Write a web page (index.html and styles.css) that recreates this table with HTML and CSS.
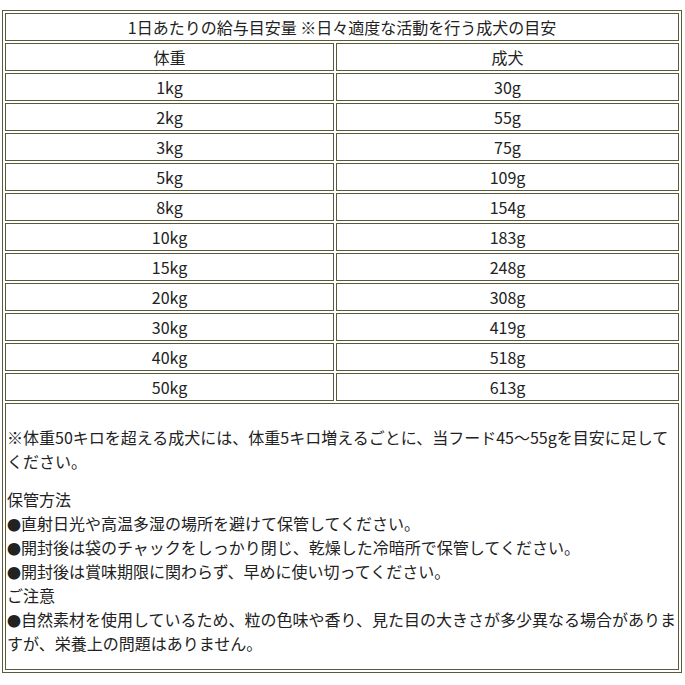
FILE: index.html
```html
<!DOCTYPE html>
<html lang="ja">
<head>
<meta charset="utf-8">
<link rel="stylesheet" href="styles.css">
</head>
<body>
<table class="feed">
  <tr><td class="title" colspan="2">1日あたりの給与目安量 ※日々適度な活動を行う成犬の目安</td></tr>
  <tr><td class="c1">体重</td><td>成犬</td></tr>
  <tr><td class="c1">1kg</td><td>30g</td></tr>
  <tr><td class="c1">2kg</td><td>55g</td></tr>
  <tr><td class="c1">3kg</td><td>75g</td></tr>
  <tr><td class="c1">5kg</td><td>109g</td></tr>
  <tr><td class="c1">8kg</td><td>154g</td></tr>
  <tr><td class="c1">10kg</td><td>183g</td></tr>
  <tr><td class="c1">15kg</td><td>248g</td></tr>
  <tr><td class="c1">20kg</td><td>308g</td></tr>
  <tr><td class="c1">30kg</td><td>419g</td></tr>
  <tr><td class="c1">40kg</td><td>518g</td></tr>
  <tr><td class="c1">50kg</td><td>613g</td></tr>
  <tr>
    <td class="notes" colspan="2">
      <div class="note-first">※体重50キロを超える成犬には、体重5キロ増えるごとに、当フード45～55gを目安に足してください。</div>
      <div class="note-second">保管方法<br><span class="dot">●</span>直射日光や高温多湿の場所を避けて保管してください。<br><span class="dot">●</span>開封後は袋のチャックをしっかり閉じ、乾燥した冷暗所で保管してください。<br><span class="dot">●</span>開封後は賞味期限に関わらず、早めに使い切ってください。<br>ご注意<br><span class="dot">●</span>自然素材を使用しているため、粒の色味や香り、見た目の大きさが多少異なる場合がありますが、栄養上の問題はありません。</div>
    </td>
  </tr>
</table>
</body>
</html>
```

FILE: styles.css
```css
html, body {
  margin: 0;
  padding: 0;
  background: #ffffff;
}
body {
  font-family: "Noto Sans CJK JP", "Noto Sans", sans-serif;
  font-size: 16px;
  line-height: 24px;
  color: #222222;
}
.feed {
  margin: 10px 0 0 2px;
  width: 680px;
  border: 1px solid #5a5a3c;
  border-collapse: separate;
  border-spacing: 2px;
}
.feed td {
  border: 1px solid #5a5a3c;
  padding: 1px;
  text-align: center;
  vertical-align: middle;
  height: 24px;
  box-sizing: content-box;
}
.feed td.c1 {
  box-sizing: border-box;
  width: 329px;
}
.feed td.notes {
  text-align: left;
  vertical-align: top;
  padding: 1px 1px 1px 1px;
}
.note-first {
  margin-top: 20px;
}
.note-second {
  margin-top: 14px;
  margin-bottom: 13px;
}
.dot {
  font-size: 14px;
  line-height: 0;
}
```
